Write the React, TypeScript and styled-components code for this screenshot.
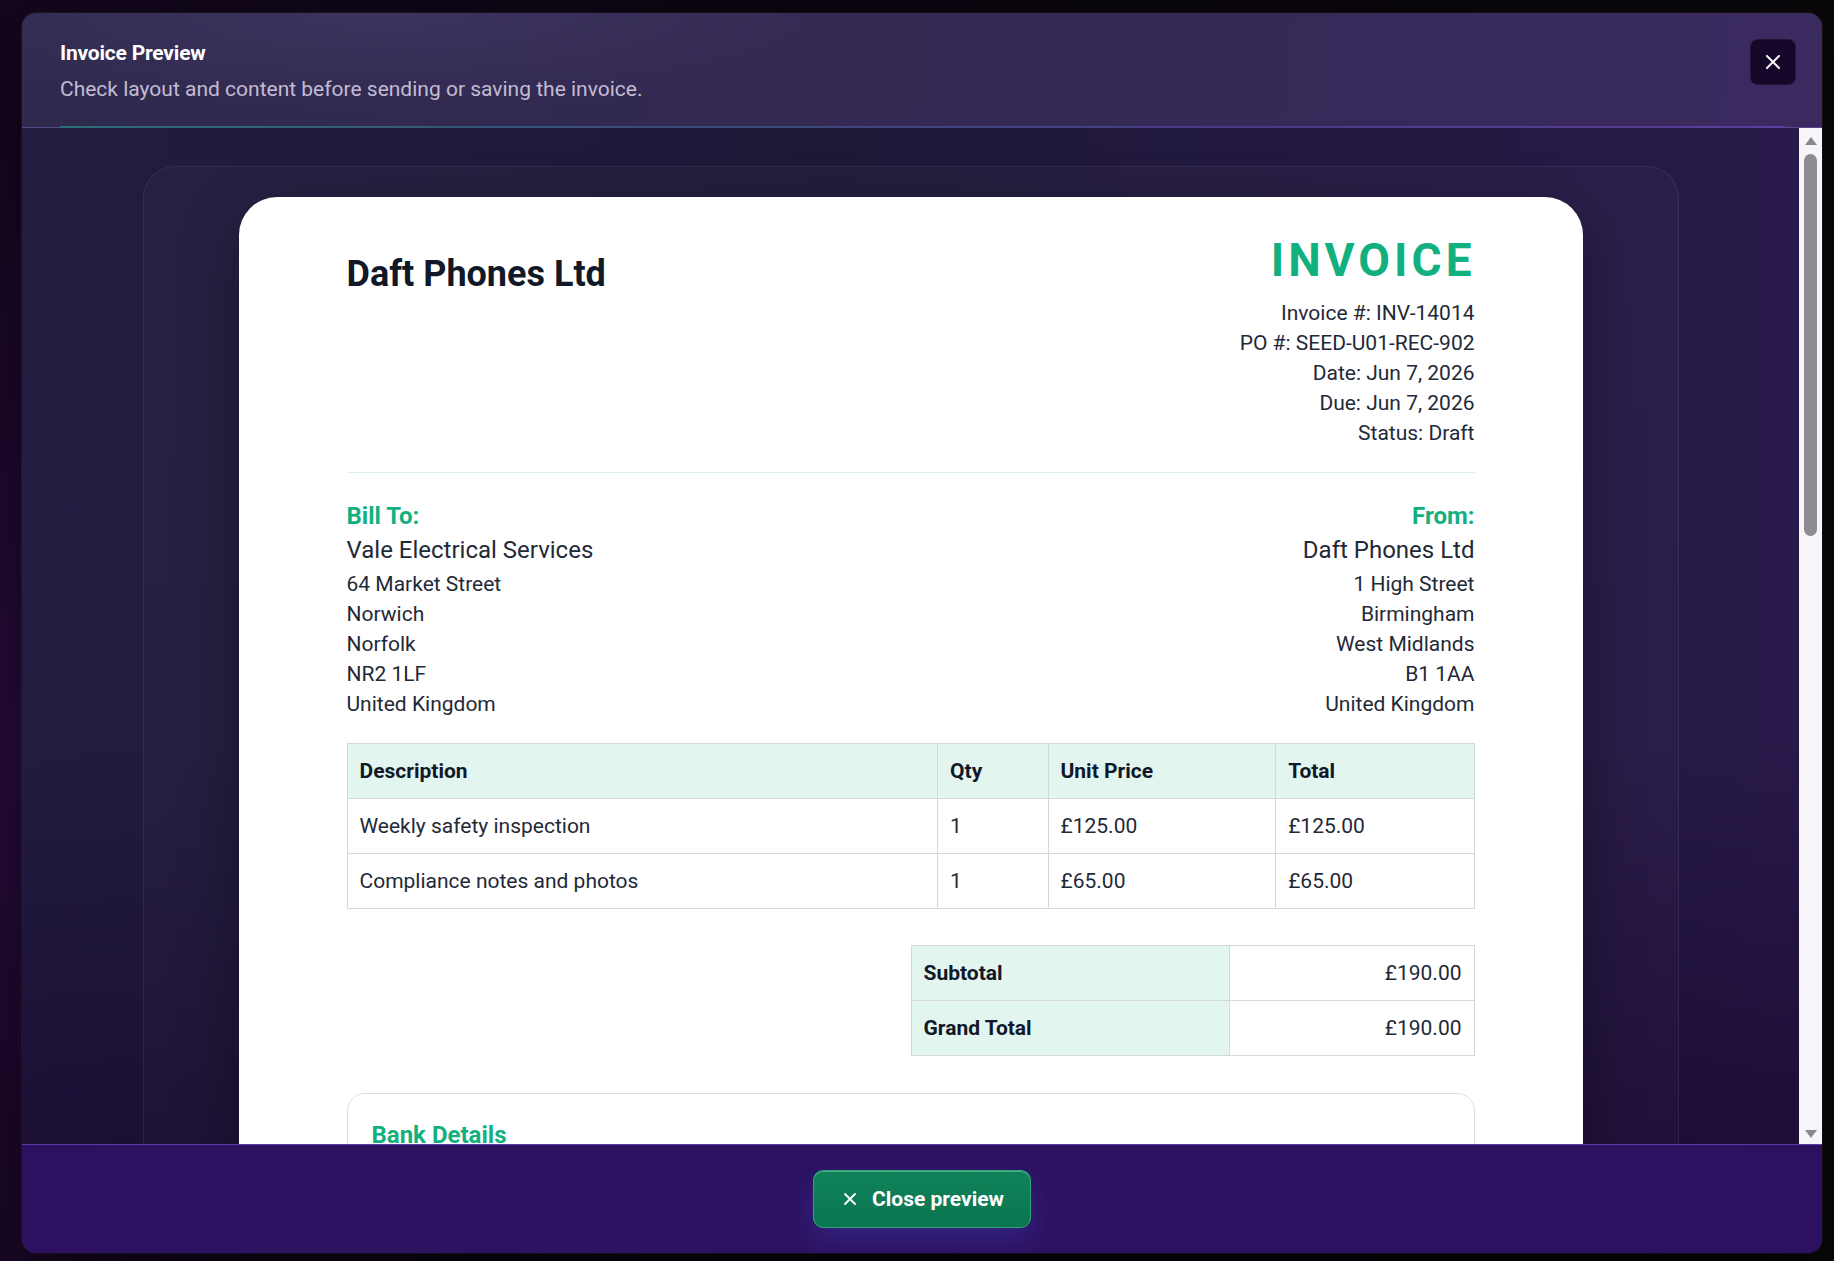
import React from "react";
import styled, { createGlobalStyle } from "styled-components";
import { X } from "lucide-react";

const GREEN = "#12b07f";
const MINT = "#e3f5ef";
const LINE = "#d5d9dc";

const GlobalStyle = createGlobalStyle`
  *, *::before, *::after { box-sizing: border-box; }
  html, body { margin: 0; padding: 0; height: 100%; }
  body {
    font-family: Roboto, "Noto Sans", Arial, sans-serif;
    background: #07050a;
    overflow: hidden;
  }
  #root { height: 100%; }
`;

const Backdrop = styled.div`
  height: 100vh;
  display: flex;
  padding: 13px 12px 8px 22px;
  background:
    radial-gradient(ellipse 30% 80% at 0% 60%, rgba(60, 14, 90, 0.55), transparent 70%),
    linear-gradient(90deg, #14071f 0%, #0b0611 40%, #09070a 100%);
`;

const Modal = styled.div`
  flex: 1;
  min-width: 0;
  display: flex;
  flex-direction: column;
  border-radius: 14px;
  overflow: hidden;
  box-shadow: 0 0 0 1px rgba(255, 255, 255, 0.05), 0 30px 80px rgba(0, 0, 0, 0.6);
`;

const Header = styled.header`
  position: relative;
  flex-shrink: 0;
  display: flex;
  justify-content: space-between;
  align-items: flex-start;
  padding: 26px 26px 24px 38px;
  background:
    radial-gradient(ellipse 40% 120% at 20% 0%, rgba(80, 70, 120, 0.35), transparent 70%),
    linear-gradient(95deg, #302a4f 0%, #332952 45%, #3a2a60 100%);
  border-bottom: 1px solid rgba(140, 110, 210, 0.4);

  &::after {
    content: "";
    position: absolute;
    left: 38px;
    right: 37px;
    bottom: -1px;
    height: 2px;
    background: linear-gradient(90deg, #2c6f76 0%, #384c78 35%, #4a3a88 70%, #5b3e9e 100%);
  }
`;

const HeaderText = styled.div`
  display: flex;
  flex-direction: column;
  gap: 8px;
`;

const Title = styled.h1`
  margin: 0;
  font: 700 21px/28px Roboto, "Noto Sans", sans-serif;
  color: #ffffff;
  letter-spacing: -0.2px;
`;

const Subtitle = styled.p`
  margin: 0;
  font: 400 21px/28px Roboto, "Noto Sans", sans-serif;
  color: #c3bcd4;
`;

const IconButton = styled.button`
  width: 46px;
  height: 46px;
  display: flex;
  align-items: center;
  justify-content: center;
  border-radius: 8px;
  border: 1px solid rgba(255, 255, 255, 0.06);
  background: #15072a;
  color: #ffffff;
  cursor: pointer;
  padding: 0;
`;

const Body = styled.div`
  flex: 1;
  min-height: 0;
  display: flex;
  background:
    linear-gradient(180deg, rgba(0, 0, 0, 0) 60%, rgba(22, 6, 44, 0.6) 100%),
    linear-gradient(90deg, #221d40 0%, #1f1938 45%, #28194a 100%);
`;

const Viewport = styled.main`
  flex: 1;
  min-width: 0;
  overflow-y: auto;
  padding: 38px 0 40px;
  scrollbar-width: none;
  &::-webkit-scrollbar {
    display: none;
  }
`;

const Rail = styled.div`
  flex: 0 0 23px;
  display: flex;
  flex-direction: column;
  align-items: center;
  background: #f7f5fa;
`;

const Arrow = styled.span<{ $dir: "up" | "down" }>`
  flex-shrink: 0;
  width: 0;
  height: 0;
  border-left: 6px solid transparent;
  border-right: 6px solid transparent;
  ${(p) =>
    p.$dir === "up"
      ? "border-bottom: 8px solid #8a888d; margin: 9px 0 5px;"
      : "border-top: 8px solid #8a888d; margin: auto 0 6px;"}
`;

const Thumb = styled.div`
  width: 13px;
  height: 382px;
  margin-top: 4px;
  border-radius: 7px;
  background: #8e8b94;
`;

const Frame = styled.div`
  max-width: 1536px;
  margin: 0 auto;
  padding: 30px 95px 60px;
  border-radius: 32px;
  border: 1px solid rgba(255, 255, 255, 0.07);
  background: linear-gradient(180deg, rgba(255, 255, 255, 0.022), rgba(255, 255, 255, 0.01));
`;

const Page = styled.article`
  background: #ffffff;
  border-radius: 38px;
  padding: 36px 108px 108px;
  min-height: 2410px;
  color: #1f2937;
  box-shadow: 0 20px 60px rgba(0, 0, 0, 0.35);
`;

const TopSection = styled.div`
  display: flex;
  justify-content: space-between;
  align-items: flex-start;
  padding-bottom: 24px;
  border-bottom: 1px solid #dcefe8;
`;

const CompanyName = styled.h2`
  margin: 20px 0 0;
  font: 700 36px/42px Roboto, "Noto Sans", sans-serif;
  color: #111827;
`;

const MetaBlock = styled.div`
  display: flex;
  flex-direction: column;
  align-items: flex-end;
`;

const InvoiceWord = styled.div`
  font: 700 46px/55px Roboto, "Noto Sans", sans-serif;
  letter-spacing: 4px;
  margin-right: -1px;
  color: ${GREEN};
  margin-bottom: 10px;
`;

const TextLine = styled.div<{ $align?: "left" | "right" }>`
  font: 400 21px/30px Roboto, "Noto Sans", sans-serif;
  color: #1f2937;
  text-align: ${(p) => p.$align ?? "left"};
`;

const Parties = styled.div`
  display: flex;
  justify-content: space-between;
  margin-top: 27px;
`;

const Party = styled.div<{ $align: "left" | "right" }>`
  display: flex;
  flex-direction: column;
  align-items: ${(p) => (p.$align === "right" ? "flex-end" : "flex-start")};
  text-align: ${(p) => p.$align};
`;

const PartyLabel = styled.div`
  font: 700 24px/32px Roboto, "Noto Sans", sans-serif;
  color: ${GREEN};
`;

const PartyName = styled.div`
  font: 400 24px/37px Roboto, "Noto Sans", sans-serif;
  color: #1f2937;
`;

const Table = styled.table<{ $half?: boolean }>`
  width: ${(p) => (p.$half ? "50%" : "100%")};
  margin-left: auto;
  border-collapse: collapse;
  table-layout: fixed;
  margin-top: ${(p) => (p.$half ? "36px" : "24px")};
`;

const Col = styled.col<{ $w: string }>`
  width: ${(p) => p.$w};
`;

const Th = styled.th`
  background: ${MINT};
  border: 1px solid ${LINE};
  padding: 14px 12px;
  font: 700 21px/26px Roboto, "Noto Sans", sans-serif;
  color: #111827;
  text-align: left;
`;

const Td = styled.td<{ $right?: boolean }>`
  border: 1px solid ${LINE};
  padding: 14px 12px;
  font: 400 21px/26px Roboto, "Noto Sans", sans-serif;
  color: #1f2937;
  text-align: ${(p) => (p.$right ? "right" : "left")};
`;

const Card = styled.section`
  margin-top: 37px;
  border: 1px solid #dcdfe2;
  border-radius: 18px;
  padding: 26px 24px 28px;
`;

const CardTitle = styled.h3`
  margin: 0 0 14px;
  font: 700 24px/30px Roboto, "Noto Sans", sans-serif;
  color: ${GREEN};
`;

const DetailRow = styled.div`
  display: grid;
  grid-template-columns: 240px 1fr;
  font: 400 21px/32px Roboto, "Noto Sans", sans-serif;
  color: #1f2937;
`;

const DetailLabel = styled.span`
  font-weight: 700;
  color: #111827;
`;

const ThankYou = styled.p`
  margin: 48px 0 0;
  text-align: center;
  font: 400 21px/30px Roboto, "Noto Sans", sans-serif;
  color: #4b5563;
`;

const Footer = styled.footer`
  flex-shrink: 0;
  height: 109px;
  display: flex;
  align-items: center;
  justify-content: center;
  background: linear-gradient(90deg, #2b1160 0%, #2d1262 50%, #2b1160 100%);
  border-top: 1px solid rgba(110, 84, 200, 0.65);
`;

const PrimaryButton = styled.button`
  display: inline-flex;
  align-items: center;
  gap: 12px;
  height: 58px;
  padding: 0 26px 0 26px;
  border-radius: 10px;
  border: 1px solid #2aa878;
  background: linear-gradient(180deg, #108259 0%, #0b7650 100%);
  color: #ffffff;
  font: 700 21px/1 Roboto, "Noto Sans", sans-serif;
  cursor: pointer;
  box-shadow: 0 12px 26px rgba(70, 80, 200, 0.28), inset 0 1px 0 rgba(140, 240, 190, 0.45);
`;

const billTo = ["64 Market Street", "Norwich", "Norfolk", "NR2 1LF", "United Kingdom"];
const from = ["1 High Street", "Birmingham", "West Midlands", "B1 1AA", "United Kingdom"];
const meta = [
  "Invoice #: INV-14014",
  "PO #: SEED-U01-REC-902",
  "Date: Jun 7, 2026",
  "Due: Jun 7, 2026",
  "Status: Draft",
];
const items = [
  { desc: "Weekly safety inspection", qty: 1, unit: "£125.00", total: "£125.00" },
  { desc: "Compliance notes and photos", qty: 1, unit: "£65.00", total: "£65.00" },
];
const bank = [
  ["Bank Name", "Barclays Bank"],
  ["Account Name", "Daft Phones Ltd"],
  ["Sort Code", "20-00-00"],
  ["Account Number", "12345678"],
  ["Reference", "INV-14014"],
];

export default function App() {
  return (
    <>
      <GlobalStyle />
      <Backdrop>
        <Modal>
          <Header>
            <HeaderText>
              <Title>Invoice Preview</Title>
              <Subtitle>Check layout and content before sending or saving the invoice.</Subtitle>
            </HeaderText>
            <IconButton aria-label="Close">
              <X size={24} strokeWidth={2} />
            </IconButton>
          </Header>

          <Body>
            <Viewport>
              <Frame>
                <Page>
                  <TopSection>
                    <CompanyName>Daft Phones Ltd</CompanyName>
                    <MetaBlock>
                      <InvoiceWord>INVOICE</InvoiceWord>
                      {meta.map((m) => (
                        <TextLine key={m} $align="right">
                          {m}
                        </TextLine>
                      ))}
                    </MetaBlock>
                  </TopSection>

                  <Parties>
                    <Party $align="left">
                      <PartyLabel>Bill To:</PartyLabel>
                      <PartyName>Vale Electrical Services</PartyName>
                      {billTo.map((l) => (
                        <TextLine key={l}>{l}</TextLine>
                      ))}
                    </Party>
                    <Party $align="right">
                      <PartyLabel>From:</PartyLabel>
                      <PartyName>Daft Phones Ltd</PartyName>
                      {from.map((l) => (
                        <TextLine key={l} $align="right">
                          {l}
                        </TextLine>
                      ))}
                    </Party>
                  </Parties>

                  <Table>
                    <colgroup>
                      <Col $w="52.4%" />
                      <Col $w="9.8%" />
                      <Col $w="20.2%" />
                      <Col $w="17.6%" />
                    </colgroup>
                    <thead>
                      <tr>
                        <Th>Description</Th>
                        <Th>Qty</Th>
                        <Th>Unit Price</Th>
                        <Th>Total</Th>
                      </tr>
                    </thead>
                    <tbody>
                      {items.map((it) => (
                        <tr key={it.desc}>
                          <Td>{it.desc}</Td>
                          <Td>{it.qty}</Td>
                          <Td>{it.unit}</Td>
                          <Td>{it.total}</Td>
                        </tr>
                      ))}
                    </tbody>
                  </Table>

                  <Table $half>
                    <colgroup>
                      <Col $w="56.6%" />
                      <Col $w="43.4%" />
                    </colgroup>
                    <tbody>
                      <tr>
                        <Th>Subtotal</Th>
                        <Td $right>£190.00</Td>
                      </tr>
                      <tr>
                        <Th>Grand Total</Th>
                        <Td $right>£190.00</Td>
                      </tr>
                    </tbody>
                  </Table>

                  <Card>
                    <CardTitle>Bank Details</CardTitle>
                    {bank.map(([k, v]) => (
                      <DetailRow key={k}>
                        <DetailLabel>{k}:</DetailLabel>
                        <span>{v}</span>
                      </DetailRow>
                    ))}
                  </Card>

                  <Card>
                    <CardTitle>Notes</CardTitle>
                    <TextLine>Payment is due on receipt. Please quote the invoice number with your payment.</TextLine>
                  </Card>

                  <ThankYou>Thank you for your business.</ThankYou>
                </Page>
              </Frame>
            </Viewport>
            <Rail aria-hidden="true">
              <Arrow $dir="up" />
              <Thumb />
              <Arrow $dir="down" />
            </Rail>
          </Body>

          <Footer>
            <PrimaryButton>
              <X size={20} strokeWidth={2.2} />
              Close preview
            </PrimaryButton>
          </Footer>
        </Modal>
      </Backdrop>
    </>
  );
}
